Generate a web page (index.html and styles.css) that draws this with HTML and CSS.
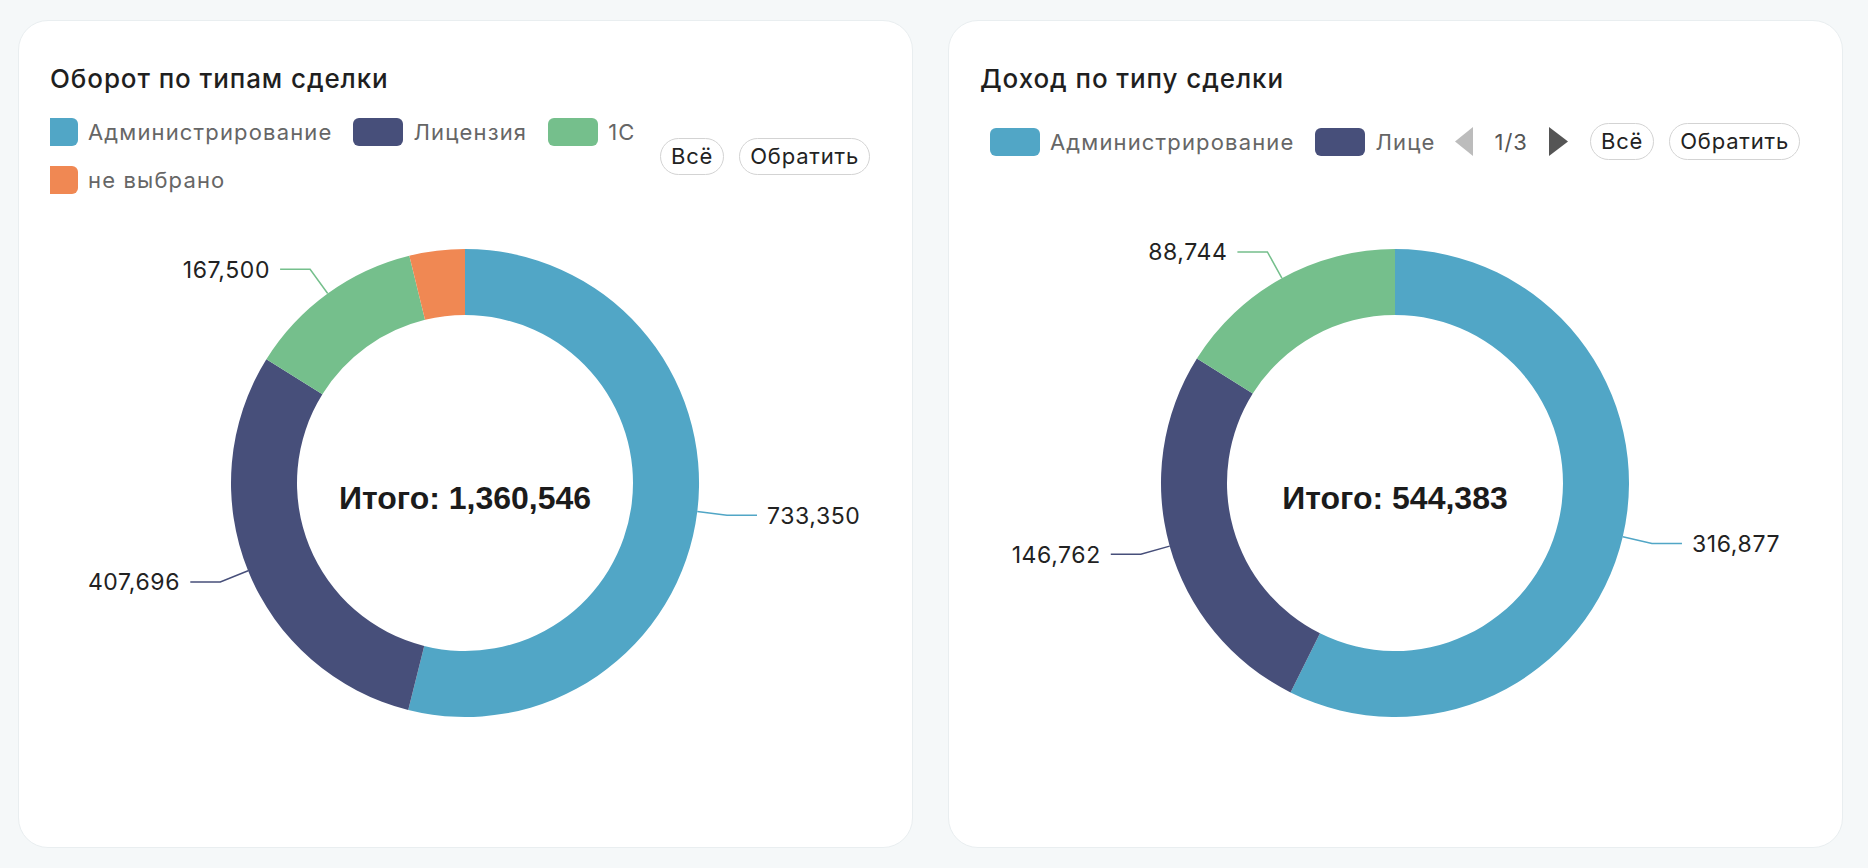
FILE: index.html
```html
<!DOCTYPE html>
<html lang="ru">
<head>
<meta charset="utf-8">
<title>Сделки</title>
<link rel="stylesheet" href="styles.css">
</head>
<body>
<main class="board">
  <section class="card">
    <header class="card-head">
      <h2 class="card-title">Оборот по типам сделки</h2>
      <div class="legend-bar legend-bar--wrap">
        <ul class="legend">
          <li class="legend-item"><span class="swatch swatch--cut c-blue"></span>Администрирование</li>
          <li class="legend-item"><span class="swatch c-navy"></span>Лицензия</li>
          <li class="legend-item"><span class="swatch c-green"></span>1С</li>
          <li class="legend-item"><span class="swatch swatch--cut c-orange"></span>не выбрано</li>
        </ul>
        <div class="actions">
          <button class="pill" type="button">Всё</button>
          <button class="pill" type="button">Обратить</button>
        </div>
      </div>
    </header>
    <svg class="chart" viewBox="0 0 893 627" width="893" height="627">
      <path class="seg-blue" d="M 446 29 A 234 234 0 1 1 389.23 490 L 405.24 425.98 A 168 168 0 1 0 446 95 Z"/>
      <path class="seg-navy" d="M 389.23 490 A 234 234 0 0 1 247.38 139.28 L 303.40 174.18 A 168 168 0 0 0 405.24 425.98 Z"/>
      <path class="seg-green" d="M 247.38 139.28 A 234 234 0 0 1 390.33 35.72 L 406.03 99.82 A 168 168 0 0 0 303.40 174.18 Z"/>
      <path class="seg-orange" d="M 390.33 35.72 A 234 234 0 0 1 446 29 L 446 95 A 168 168 0 0 0 406.03 99.82 Z"/>
      <polyline class="line-blue" points="678.25,291.6 708,295.3 738,295.3"/>
      <polyline class="line-navy" points="229.1,350.7 201.3,362 171.3,362"/>
      <polyline class="line-green" points="308.7,73.5 291.1,49.2 261.1,49.2"/>
      <text class="lbl" x="748" y="303.5">733,350</text>
      <text class="lbl" x="161" y="370.4" text-anchor="end">407,696</text>
      <text class="lbl" x="251" y="57.6" text-anchor="end">167,500</text>
      <text class="total" x="446" y="289" text-anchor="middle">Итого: 1,360,546</text>
    </svg>
  </section>

  <section class="card">
    <header class="card-head">
      <h2 class="card-title">Доход по типу сделки</h2>
      <div class="legend-bar">
        <div class="legend legend--paged">
          <span class="legend-item"><span class="swatch c-blue"></span>Администрирование</span>
          <span class="legend-item"><span class="swatch c-navy"></span>Лице</span>
          <span class="pager">
            <svg class="pager-arrow" viewBox="0 0 18 29" width="18" height="29"><polygon class="arrow-off" points="18,0 18,29 0,14.5"/></svg>
            <span class="pager-count">1/3</span>
            <svg class="pager-arrow" viewBox="0 0 19 29" width="19" height="29"><polygon class="arrow-on" points="0,0 0,29 19,14.5"/></svg>
          </span>
        </div>
        <div class="actions">
          <button class="pill" type="button">Всё</button>
          <button class="pill" type="button">Обратить</button>
        </div>
      </div>
    </header>
    <svg class="chart" viewBox="0 0 893 627" width="893" height="627">
      <path class="seg-blue" d="M 446 29 A 234 234 0 1 1 341.52 472.38 L 370.99 413.33 A 168 168 0 1 0 446 95 Z"/>
      <path class="seg-navy" d="M 341.52 472.38 A 234 234 0 0 1 247.90 138.44 L 303.77 173.57 A 168 168 0 0 0 370.99 413.33 Z"/>
      <path class="seg-green" d="M 247.90 138.44 A 234 234 0 0 1 446 29 L 446 95 A 168 168 0 0 0 303.77 173.57 Z"/>
      <polyline class="line-blue" points="673.76,316.67 702.96,323.55 732.96,323.55"/>
      <polyline class="line-navy" points="220.67,326.12 191.79,334.22 161.79,334.22"/>
      <polyline class="line-green" points="332.9,58.2 318.4,31.9 288.4,31.9"/>
      <text class="lbl" x="743" y="332">316,877</text>
      <text class="lbl" x="151.8" y="342.6" text-anchor="end">146,762</text>
      <text class="lbl" x="278.4" y="40.3" text-anchor="end">88,744</text>
      <text class="total" x="446" y="289" text-anchor="middle">Итого: 544,383</text>
    </svg>
  </section>
</main>
</body>
</html>
```

FILE: styles.css
```css
* { box-sizing: border-box; }

html, body {
  margin: 0;
  padding: 0;
  background: #f5f8f9;
  font-family: Inter, "Noto Sans", "Liberation Sans", sans-serif;
}

.board {
  display: flex;
  gap: 35px;
  padding: 20px 0 0 18px;
}

.card {
  width: 895px;
  height: 828px;
  flex: none;
  display: flex;
  flex-direction: column;
  background: #ffffff;
  border: 1px solid #e9eef0;
  border-radius: 30px;
  overflow: hidden;
}

.card-head {
  height: 199px;
  flex: none;
  padding: 42px 42px 0 31px;
}

.card-title {
  margin: 0;
  font-size: 26px;
  line-height: 32px;
  font-weight: 500;
  letter-spacing: 0.9px;
  color: #1f1f1f;
}

.legend-bar {
  display: flex;
  align-items: center;
  justify-content: space-between;
  gap: 20px;
  margin-top: 28px;
}

.legend-bar--wrap {
  margin-top: 23px;
}

.legend {
  flex: 1;
  display: flex;
  flex-wrap: wrap;
  align-items: center;
  column-gap: 21px;
  row-gap: 20px;
  margin: 0;
  padding: 0;
  list-style: none;
}

.legend--paged {
  flex: none;
  flex-wrap: nowrap;
  margin-left: 10px;
}

.legend-item {
  display: flex;
  align-items: center;
  gap: 10px;
  height: 28px;
  font-size: 22px;
  line-height: 28px;
  letter-spacing: 1.15px;
  color: #666666;
  white-space: nowrap;
}

.swatch {
  display: block;
  width: 50px;
  height: 28px;
  border-radius: 6px;
  flex: none;
}

.swatch--cut {
  width: 28px;
  border-radius: 0 6px 6px 0;
}

.c-blue { background: #51a6c6; }
.c-navy { background: #474f7a; }
.c-green { background: #75bf8c; }
.c-orange { background: #f08853; }

.pager {
  display: flex;
  align-items: center;
  gap: 21px;
  margin-left: -1px;
}

.pager-arrow { display: block; }
.arrow-off { fill: #bcbcbc; }
.arrow-on { fill: #555555; }

.pager-count {
  font-size: 22px;
  line-height: 28px;
  letter-spacing: 1px;
  color: #555555;
}

.actions {
  display: flex;
  gap: 15px;
  flex: none;
}

.pill {
  height: 37px;
  padding: 0 10px;
  border: 1px solid #d3d3d3;
  border-radius: 19px;
  background: #ffffff;
  font-family: Inter, "Noto Sans", sans-serif;
  font-size: 22px;
  line-height: 35px;
  letter-spacing: 0.8px;
  color: #222222;
  cursor: pointer;
}

.chart {
  display: block;
  flex: none;
}

.seg-blue { fill: #51a6c6; }
.seg-navy { fill: #474f7a; }
.seg-green { fill: #75bf8c; }
.seg-orange { fill: #f08853; }

.line-blue, .line-navy, .line-green {
  fill: none;
  stroke-width: 1.5;
}
.line-blue { stroke: #51a6c6; }
.line-navy { stroke: #474f7a; }
.line-green { stroke: #75bf8c; }

.lbl {
  font-family: Inter, "Noto Sans", sans-serif;
  font-size: 23px;
  letter-spacing: 0.6px;
  fill: #222222;
}

.total {
  font-family: "Liberation Sans", Arial, sans-serif;
  font-weight: 700;
  font-size: 32px;
  fill: #1b1b1b;
}
```
